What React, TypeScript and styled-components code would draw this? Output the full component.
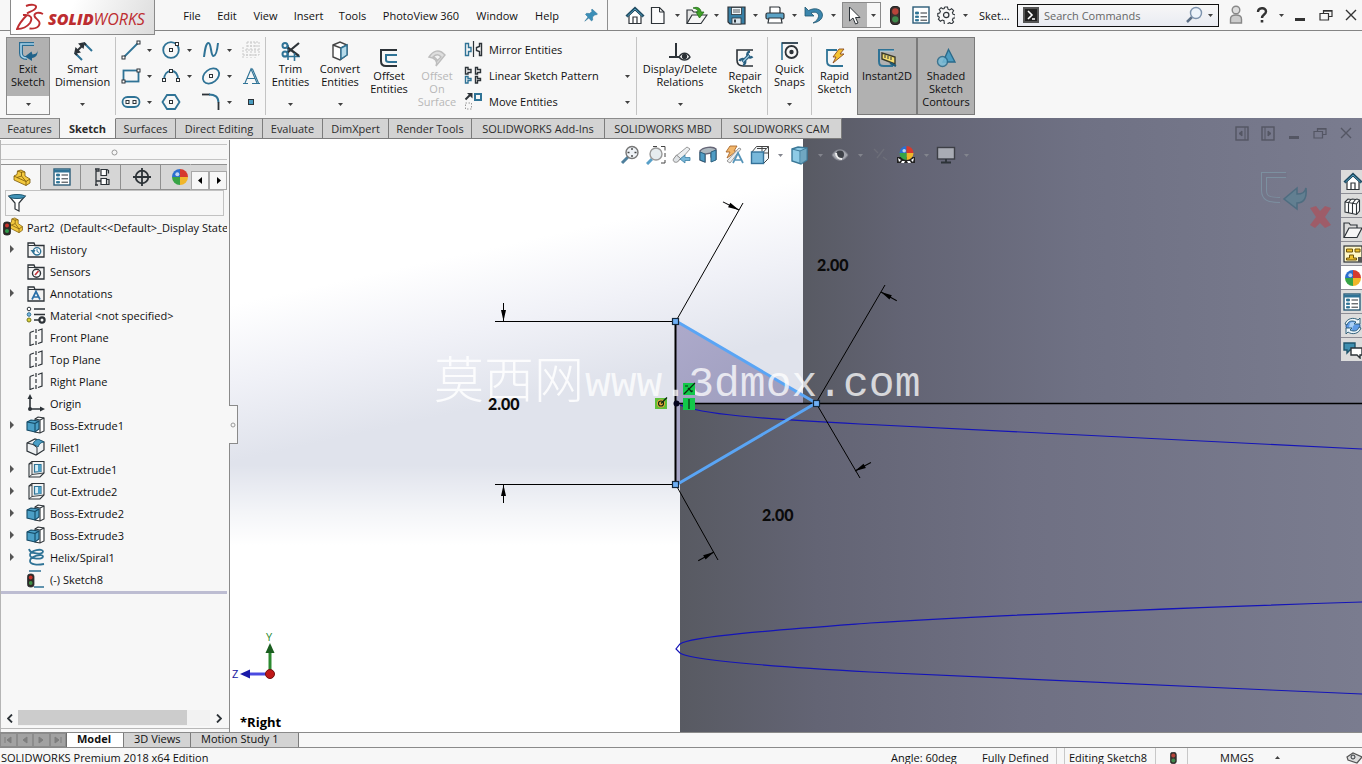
import React from "react";
import styled, { createGlobalStyle } from "styled-components";

const GlobalStyle = createGlobalStyle`
  *, *::before, *::after { box-sizing: border-box; }
  body { margin: 0; overflow: hidden; }
  body, button, input {
    font-family: "Open Sans", "Noto Sans", sans-serif;
    font-size: 11px;
    line-height: 13px;
    color: #101010;
  }
  button { background: none; border: 0; padding: 0; margin: 0; white-space: nowrap; }
  svg { display: block; flex: none; }
  ul { list-style: none; margin: 0; padding: 0; }
`;

const INK = "#2d3338";
const BLUE = "#2f7396";

/* ---------- layout parts ---------- */

const Window = styled.div`
  display: flex;
  flex-direction: column;
  height: 100vh;
  background: #f7f7f7;
`;

const TitleBar = styled.header`
  display: flex;
  align-items: center;
  height: 31px;
  flex: none;
  border-bottom: 1px solid #858585;
`;

const LogoSlot = styled.div`
  align-self: flex-start;
  width: 145px;
  height: 35px;
  margin-left: 10px;
  margin-right: 20px;
  flex: none;
  position: relative;
  z-index: 2;
  display: flex;
  align-items: center;
  gap: 4px;
  background: linear-gradient(115deg, #ffffff 40%, #dcdcdc);
  border: 1px solid #8a8a8a;
  border-top: 0;
  color: #bd2d30;
  padding-left: 5px;
`;

const LogoText = styled.span`
  font-family: "Open Sans", sans-serif;
  font-style: italic;
  font-size: 16px;
  line-height: 20px;
  padding-top: 4px;
  b { font-weight: 800; }
`;

const Menu = styled.nav`
  display: flex;
`;

const MenuItem = styled.button<{ $w: number }>`
  width: ${(p) => p.$w}px;
  height: 26px;
  text-align: center;
`;

const PinButton = styled.button`
  width: 40px;
  height: 30px;
  display: flex;
  align-items: center;
  justify-content: center;
  padding-left: 7px;
  border-right: 1px solid #8f8f8f;
  margin-right: 15px;
`;

const Tools = styled.div`
  display: flex;
  align-items: center;
  flex: none;
`;

const ToolButton = styled.button<{ $w?: number; $on?: boolean }>`
  width: ${(p) => p.$w ?? 24}px;
  height: 24px;
  display: flex;
  align-items: center;
  justify-content: center;
  background: ${(p) => (p.$on ? "#b4b4b4" : "none")};
`;

const ArrowButton = styled.button<{ $w?: number; $h?: number }>`
  width: ${(p) => p.$w ?? 17}px;
  height: ${(p) => p.$h ?? 20}px;
  display: flex;
  align-items: center;
  justify-content: center;
`;

const SelectGroup = styled.div`
  display: flex;
  border: 1px solid #8a8a8a;
  margin-right: 2px;
`;

const DocTitle = styled.span`
  flex: 1;
  min-width: 34px;
  padding-left: 5px;
`;

const SearchBox = styled.form`
  display: flex;
  align-items: center;
  width: 202px;
  height: 23px;
  flex: none;
  border: 1px solid #101010;
  background: linear-gradient(#f7f7f7, #e9ebf2);
  padding-left: 5px;
`;

const SearchInput = styled.input`
  flex: 1;
  min-width: 0;
  border: 0;
  background: none;
  outline: none;
  margin-left: 5px;
  padding: 0;
  &::placeholder { color: #666; opacity: 1; }
`;

const WindowButtons = styled.div`
  display: flex;
  align-items: center;
  padding-left: 4px;
  flex: none;
`;

const Ribbon = styled.section`
  display: flex;
  height: 87px;
  flex: none;
  padding: 6px 0 3px 6px;
`;

const RibbonItem = styled.div<{ $w: number; $on?: boolean }>`
  width: ${(p) => p.$w}px;
  height: 78px;
  flex: none;
  display: flex;
  flex-direction: column;
  align-items: center;
  background: ${(p) => (p.$on ? "#b1b1b1" : "none")};
  border: ${(p) => (p.$on ? "1px solid #7a7a7a" : "1px solid transparent")};
`;

const SplitItem = styled(RibbonItem)`
  background: #f7f7f7;
  border-color: #8a8a8a;
`;

const RibbonButton = styled.button<{ $low?: boolean; $off?: boolean; $pressed?: boolean }>`
  width: 100%;
  height: ${(p) => (p.$low ? 74 : 58)}px;
  flex: none;
  padding-top: ${(p) => (p.$low ? 9 : 2)}px;
  display: flex;
  flex-direction: column;
  align-items: center;
  text-align: center;
  color: ${(p) => (p.$off ? "#b8b8b8" : "#101010")};
  background: ${(p) => (p.$pressed ? "#b1b1b1" : "none")};
`;

const RibbonGlyph = styled.span`
  height: 22px;
  flex: none;
  display: flex;
  align-items: center;
`;

const RibbonLabel = styled.span`
  white-space: pre;
`;

const Rule = styled.i`
  width: 1px;
  height: 78px;
  background: #c4c4c4;
  flex: none;
`;

const SketchGrid = styled.div`
  display: grid;
  grid-template-columns: repeat(4, 40px);
  grid-auto-rows: 26px;
  width: 149px;
  padding-left: 4px;
  overflow: hidden;
  flex: none;
`;

const GridCell = styled.div`
  display: flex;
  align-items: center;
`;

const CommandList = styled.div`
  display: flex;
  flex-direction: column;
  width: 175px;
  padding-left: 3px;
  flex: none;
`;

const CommandRow = styled.div`
  display: flex;
  align-items: center;
  height: 26px;
`;

const Command = styled.button`
  flex: 1;
  display: flex;
  align-items: center;
  gap: 6px;
  text-align: left;
  padding-bottom: 2px;
`;

const Work = styled.main`
  position: relative;
  flex: 1;
  min-height: 0;
  display: flex;
  flex-direction: column;
  background: #ffffff;
`;

const SceneSvg = styled.svg`
  position: absolute;
  inset: 0;
  width: 100%;
  height: 100%;
`;

const TabRow = styled.div`
  position: relative;
  display: flex;
  height: 22px;
  flex: none;
`;

const Tab = styled.button<{ $w: number; $active?: boolean }>`
  width: ${(p) => p.$w}px;
  height: 21px;
  flex: none;
  background: ${(p) => (p.$active ? "#f7f7f7" : "#d3d3d3")};
  font-weight: ${(p) => (p.$active ? 700 : 400)};
  color: #2c2c2c;
  border-right: 1px solid #7c7c7c;
  border-top: 1px solid ${(p) => (p.$active ? "#f7f7f7" : "#8c8c8c")};
  border-bottom: 1px solid #7c7c7c;
`;

const DocButtons = styled.div`
  display: flex;
  align-items: center;
  gap: 6px;
  margin-left: auto;
  padding: 8px 6px 0 0;
  opacity: 0.8;
`;

const Body = styled.div`
  position: relative;
  flex: 1;
  min-height: 0;
  display: flex;
`;

const Sidebar = styled.aside`
  position: relative;
  width: 230px;
  flex: none;
  display: flex;
  flex-direction: column;
  background: #f7f7f7;
  border-left: 1px solid #b5b5b5;
  border-right: 1px solid #8a8a8a;
`;

const Splitter = styled.div`
  height: 16px;
  margin: 4px 2px 4px 0;
  flex: none;
  border-top: 1px solid #c4c4c4;
  border-bottom: 1px solid #c4c4c4;
  display: flex;
  align-items: center;
  justify-content: center;
`;

const PanelTabs = styled.div`
  display: flex;
  height: 26px;
  flex: none;
  margin-right: 2px;
  overflow: hidden;
`;

const PanelTab = styled.button<{ $active?: boolean; $last?: boolean }>`
  width: ${(p) => (p.$last ? 30 : 40)}px;
  flex: none;
  display: flex;
  align-items: center;
  justify-content: center;
  padding-left: ${(p) => (p.$last ? 9 : 2)}px;
  background: ${(p) => (p.$active ? "#f7f7f7" : "#d6d6d6")};
  border-top: 1px solid #909090;
  border-bottom: 1px solid ${(p) => (p.$active ? "#f7f7f7" : "#909090")};
  border-right: 1px solid ${(p) => (p.$last ? "transparent" : "#909090")};
`;

const PanelScroll = styled.div`
  display: flex;
  align-items: flex-end;
  background: #d6d6d6;
  border-top: 1px solid #909090;
  button {
    width: 18px;
    height: 19px;
    background: #f7f7f7;
    border: 1px solid #a8a8a8;
    display: flex;
    align-items: center;
    justify-content: center;
  }
`;

const FilterBox = styled.label`
  display: flex;
  align-items: center;
  height: 26px;
  margin: 0 5px 0 4px;
  padding-left: 1px;
  border: 1px solid #c2c2c2;
  flex: none;
  input { flex: 1; min-width: 0; border: 0; background: none; outline: none; }
`;

const Tree = styled.ul`
  margin-right: 2px;
  overflow: hidden;
  border-bottom: 3px solid #bdbdd2;
  padding-bottom: 1px;
`;

const TreeRow = styled.li<{ $root?: boolean }>`
  display: flex;
  align-items: center;
  height: 22px;
  gap: 4px;
  padding-left: ${(p) => (p.$root ? 2 : 7)}px;
  white-space: pre;
`;

const Expander = styled.button`
  width: 14px;
  height: 22px;
  padding-left: 2px;
  display: flex;
  align-items: center;
  flex: none;
`;

const TreeIcon = styled.span`
  width: 20px;
  flex: none;
  display: flex;
  justify-content: center;
`;

const ScrollRow = styled.div`
  display: flex;
  align-items: center;
  height: 16px;
  margin-top: auto;
  margin-bottom: 2px;
  flex: none;
  padding-right: 2px;
`;

const ScrollTrack = styled.div`
  flex: 1;
  height: 16px;
  background: #f2f2f2;
`;

const ScrollThumb = styled.div`
  width: 88%;
  height: 15px;
  background: #cccccc;
`;

const PanelEdge = styled.div`
  height: 4px;
  flex: none;
  border-top: 1px solid #b8b8b8;
`;

const CollapseHandle = styled.button`
  position: absolute;
  left: 100%;
  top: 265px;
  width: 9px;
  height: 39px;
  background: #f7f7f7;
  border: 1px solid #8a8a8a;
  border-left: 0;
  display: flex;
  align-items: center;
  justify-content: center;
`;

const Viewport = styled.section`
  flex: 1;
  min-width: 0;
`;

const HeadsUp = styled.div`
  display: flex;
  justify-content: center;
  padding-top: 3px;
  padding-right: 2px;
`;

const TaskPane = styled.div`
  position: absolute;
  right: 0;
  top: 30px;
  display: flex;
  flex-direction: column;
  background: #8d8d95;
  gap: 1px;
`;

const TaskButton = styled.button<{ $active?: boolean }>`
  width: 21px;
  height: 23px;
  display: flex;
  align-items: center;
  justify-content: flex-start;
  padding-left: 2px;
  overflow: hidden;
  background: ${(p) => (p.$active ? "#ffffff" : "#dcdcdc")};
`;

const ConfirmCorner = styled.div`
  position: absolute;
  right: 28px;
  top: 30px;
  opacity: 0.8;
`;

const BottomTabs = styled.div`
  display: flex;
  height: 16px;
  flex: none;
  border-top: 1px solid #8a8a8a;
  border-bottom: 1px solid #8a8a8a;
`;

const NavGroup = styled.div`
  display: flex;
  width: 67px;
  background: #a2a2a2;
  border-right: 1px solid #6d6d6d;
  button {
    flex: 1;
    border: 1px solid #8c8c8c;
    display: flex;
    align-items: center;
    justify-content: center;
  }
`;

const BottomTab = styled.button<{ $w: number; $active?: boolean }>`
  width: ${(p) => p.$w}px;
  padding: 0 0 3px 10px;
  text-align: left;
  line-height: 11px;
  background: ${(p) => (p.$active ? "#ffffff" : "#d3d3d3")};
  font-weight: ${(p) => (p.$active ? 700 : 400)};
  border-right: 1px solid #7c7c7c;
`;

const StatusBar = styled.footer`
  display: flex;
  align-items: center;
  height: 16px;
  flex: none;
  padding-left: 1px;
  overflow: hidden;
`;

const StatusCell = styled.span<{ $w: number; $line?: boolean }>`
  width: ${(p) => p.$w}px;
  height: 16px;
  flex: none;
  display: flex;
  align-items: center;
  padding-left: 4px;
  padding-top: 3px;
  border-right: 1px solid ${(p) => (p.$line ? "#c8c8c8" : "transparent")};
`;

const StatusName = styled.span`
  flex: 1;
  padding-top: 3px;
`;

/* ---------- small drawings ---------- */

type IconProps = { w?: number; h?: number; children: React.ReactNode };
const Icon = ({ w = 20, h = 20, children }: IconProps) => (
  <svg width={w} height={h} viewBox={`0 0 ${w} ${h}`} fill="none" stroke={INK} strokeWidth="1.4" aria-hidden="true">
    {children}
  </svg>
);

const Caret = ({ up, color = "#404040" }: { up?: boolean; color?: string }) => (
  <svg width="5" height="3" viewBox="0 0 5 3" aria-hidden="true">
    <path d={up ? "M0 3h5L2.5 0z" : "M0 0h5L2.5 3z"} fill={color} />
  </svg>
);

const Arrow = ({ w, h, label = "More options", color }: { w?: number; h?: number; label?: string; color?: string }) => (
  <ArrowButton $w={w} $h={h} aria-label={label}>
    <Caret color={color} />
  </ArrowButton>
);

const Dot = ({ x, y }: { x: number; y: number }) => (
  <rect x={x - 1.5} y={y - 1.5} width="3" height="3" fill="#fff" stroke={INK} strokeWidth="1" />
);

const TrafficLight = ({ h = 18 }: { h?: number }) => (
  <svg width={(h * 10) / 18} height={h} viewBox="0 0 10 18" aria-hidden="true">
    <rect x="0.5" y="0.5" width="9" height="17" rx="3.5" fill="#3a3230" stroke="#222" />
    <circle cx="5" cy="5.2" r="3" fill="#b8443a" />
    <circle cx="5" cy="12.6" r="3" fill="#3f8a4c" />
  </svg>
);

const Ball = ({ x, y, r }: { x: number; y: number; r: number }) => (
  <g stroke="none">
    <path d={`M${x} ${y}V${y - r}A${r} ${r} 0 0 0 ${x - r} ${y}z`} fill="#2b6fd0" />
    <path d={`M${x} ${y}V${y - r}A${r} ${r} 0 0 1 ${x + r} ${y}z`} fill="#d63a2e" />
    <path d={`M${x} ${y}H${x + r}A${r} ${r} 0 0 1 ${x} ${y + r}z`} fill="#f0b62a" />
    <path d={`M${x} ${y}V${y + r}A${r} ${r} 0 0 1 ${x - r} ${y}z`} fill="#37a446" />
    <circle cx={x - r / 3} cy={y - r / 3} r={r / 4} fill="#fff" opacity="0.7" />
  </g>
);

const HomeIcon = () => (
  <Icon w={20} h={19}>
    <path d="M4 9v8.5h12V9L10 3.5z" fill="#fff" strokeWidth="1.2" />
    <path d="M8 17.5V11h4v6.500" strokeWidth="1.2" />
    <path d="M1.500 10.500L10 2.500l8.500 8" stroke="#1f4a61" strokeWidth="3" />
    <path d="M2.500 10L10 3l7.500 7" stroke="#4f9dbd" strokeWidth="1" />
  </Icon>
);

const NewIcon = () => (
  <Icon w={16} h={19}>
    <path d="M1.500 1.500h8l4.500 4.500v11.500h-12.500z" fill="#fbfbfb" strokeWidth="1.2" />
    <path d="M9.500 1.500v4.500h4.500" strokeWidth="1" />
  </Icon>
);

const FolderIcon = () => (
  <Icon w={20} h={19}>
    <path d="M1 17V3h5l1.500 2H14v3" fill="#dcdcdc" strokeWidth="1.2" />
    <path d="M1 17.500L6 8h13l-5 9.500z" fill="#f6f6f6" strokeWidth="1.2" />
  </Icon>
);

const OpenIcon = () => (
  <Icon w={22} h={19}>
    <path d="M1 17V4h5l1.500 2H13v3" fill="#e6e6e6" strokeWidth="1.2" />
    <path d="M1 17.500L6 9h15l-6 8.500z" fill="#f6f6f6" strokeWidth="1.2" />
    <path d="M7 2c5-2 8 1 8 4h3l-4.500 6L10 6h2c0-2-2-3.500-5-4z" fill="#3fa227" stroke="#24701a" strokeWidth="0.8" />
  </Icon>
);

const SaveIcon = () => (
  <Icon w={19} h={19}>
    <path d="M1 1h17v17H3l-2-2z" fill="#377fa5" strokeWidth="1.2" />
    <rect x="4.500" y="1.500" width="10" height="7" fill="#eef5f9" strokeWidth="0.8" />
    <path d="M6 4h7M6 6h7" strokeWidth="0.8" />
    <rect x="5" y="12" width="9" height="6" fill="#d9e6ee" strokeWidth="0.8" />
    <path d="M7 13.500h2v3H7z" fill={INK} stroke="none" />
  </Icon>
);

const PrintIcon = () => (
  <Icon w={20} h={18}>
    <path d="M5 7V1h9l1 1v5" fill="#fff" strokeWidth="1.2" />
    <rect x="1" y="7" width="18" height="6" rx="1.500" fill="#5ba3c6" strokeWidth="1.2" />
    <path d="M4 12h12l1 5H3z" fill="#fff" strokeWidth="1.2" />
  </Icon>
);

const UndoIcon = () => (
  <Icon w={20} h={18}>
    <path d="M1 1v9h9L7 7c4-2 8 0 7.500 3.500C14 13 12.500 15 9 17c6-1 9.500-4 9.500-8C18 3 11 1 4.500 4.500z" fill="#3b86ad" stroke="#20556f" strokeWidth="0.8" />
  </Icon>
);

const CursorIcon = () => (
  <Icon w={14} h={19}>
    <path d="M1.500 1v14l3.500-3 2.500 6 2.500-1-2.500-5.500H12z" fill="#fff" strokeWidth="1" />
  </Icon>
);

const OptionsIcon = ({ head }: { head?: boolean }) => (
  <Icon w={18} h={18}>
    <rect x="1" y="1" width="16" height="16" fill="#fff" stroke="#2b5c78" strokeWidth="1.400" />
    {head && <path d="M1 3h16" stroke={BLUE} strokeWidth="3" />}
    <path d="M3.500 6h3v2h-3zM3.500 10h3v1.500h-3zM3.500 13.500h3V15h-3z" fill={BLUE} stroke={BLUE} strokeWidth="0.800" />
    <path d="M8.500 7h6.500M8.500 10.800h6.500M8.500 14.200h6.500" strokeWidth="1" />
  </Icon>
);

const GearIcon = () => (
  <Icon w={18} h={18}>
    <path
      d="M7.500 1h3l.5 2.200 1.700.7 1.900-1.200 2 2-1.200 1.900.7 1.700 2.200.5v3l-2.200.5-.7 1.700 1.200 1.900-2 2-1.900-1.200-1.700.7-.5 2.200h-3L7 14.700l-1.700-.7-1.900 1.200-2-2L2.600 11.300"
      strokeWidth="1.100"
    />
    <path d="M2.600 11.300L.8 10.200V7.500L2.700 7l.7-1.700L2.200 3.500l1.900-1.800L6 3l1.200-.5.300-1.500" strokeWidth="1.100" />
    <circle cx="9.200" cy="9" r="2.700" strokeWidth="1.200" />
  </Icon>
);

const PinIcon = () => (
  <Icon w={14} h={14}>
    <path d="M8 1l5.500 5-1.500 1-1-.3-2.500 2.300.2 3-1.200 1-2.700-3L.8 13.200 4 9 1.500 6.500l1-1.200 3 .2L8 3.500 7.500 2z" fill="#3b8fb8" stroke="#2b7196" strokeWidth="0.500" />
  </Icon>
);

const Restore = ({ color = "#333" }: { color?: string }) => (
  <Icon w={14} h={12}>
    <path d="M4.500 4V1.500h8.500v6h-3.500M1 4.500h8.500V11H1z" stroke={color} strokeWidth="1.200" />
    <path d="M4 2h9" stroke={color} />
  </Icon>
);

const Cross = ({ color = "#333" }: { color?: string }) => (
  <Icon w={12} h={12}><path d="M1 1l10 10M11 1L1 11" stroke={color} /></Icon>
);

const Minus = ({ color = "#333" }: { color?: string }) => (
  <Icon w={12} h={14}><path d="M1 11.500h10" stroke={color} strokeWidth="3" /></Icon>
);

/* ---------- ribbon icons ---------- */

const ExitIcon = () => (
  <Icon w={22} h={22}>
    <path d="M17 4H4v9c0 4 2 5 6 5" stroke="#2a6c92" strokeWidth="4" />
    <path d="M17 4H4v9c0 4 2 5 6 5" stroke="#a9d4ea" strokeWidth="1.600" />
    <path d="M20.500 10c0 3-1.500 4-5 4.500l-1-3-6.500 5 7 4.500v-3c4-.5 6-3 5.500-8z" fill="#1f628a" stroke="none" />
  </Icon>
);

const DimensionIcon = () => (
  <Icon w={22} h={22}>
    <path d="M5 11l6-6" stroke={INK} strokeWidth="2" />
    <path d="M2 14l1.500-7L9 12.500zM13 2l-1.500 7L6 3.500z" fill={INK} stroke="none" />
    <path d="M12 3l8 8M3 13l7 7" stroke={BLUE} strokeWidth="2" />
    <path d="M12 3l2 2M3 13l2 2" stroke={INK} strokeWidth="2" />
  </Icon>
);

const TrimIcon = () => (
  <Icon w={22} h={22}>
    <path d="M3 16.500h17M8 5v15" stroke={BLUE} strokeWidth="1.600" />
    <path d="M19 3L7 13M7 7l12 9" stroke={INK} strokeWidth="2.200" />
    <circle cx="5" cy="5.500" r="2.500" stroke={BLUE} strokeWidth="2" />
    <circle cx="5" cy="14" r="2.500" stroke={BLUE} strokeWidth="2" />
    <path d="M14.500 13v8" stroke={BLUE} strokeWidth="1.600" />
  </Icon>
);

const ConvertIcon = () => (
  <Icon w={22} h={22}>
    <path d="M4 5l7-3 7 3v10l-7 5-7-3z" fill="#fff" stroke="#444" />
    <path d="M4 5l8 3v11M12 8l6-3" stroke="#444" />
    <path d="M12 8l6-3v10l-6 4z" fill="#b7dbea" stroke={BLUE} />
  </Icon>
);

const OffsetIcon = () => (
  <Icon w={20} h={20}>
    <path d="M18 2H2v11c0 4 2 5 5 5h11" strokeWidth="2" />
    <path d="M18 7H7v5c0 1 1 2 3 2h8" stroke={BLUE} strokeWidth="2" />
  </Icon>
);

const SurfaceIcon = () => (
  <Icon w={20} h={20}>
    <path d="M2 9c4-6 10-9 16-2L9 18c2-5-1-8-7-9z" fill="#dedede" stroke="#bdbdbd" />
    <path d="M6 9c3-3 6-3 8 0l-4 4c0-2-1-3-4-4z" stroke="#bdbdbd" fill="#f2f2f2" />
  </Icon>
);

const RelationsIcon = () => (
  <Icon w={28} h={20}>
    <path d="M10 2v14M3 16h13" strokeWidth="2" />
    <path d="M13 16c3-5 8-5 11 0-3 4-8 4-11 0z" fill="#fff" />
    <circle cx="18.500" cy="15.500" r="2" fill={INK} />
  </Icon>
);

const RepairIcon = () => (
  <Icon w={20} h={20}>
    <path d="M18 2H2v10c0 4 2 6 6 6h10" stroke={INK} strokeWidth="1.600" />
    <path d="M7.500 14l7-7" stroke="#285f80" strokeWidth="3.600" />
    <path d="M17.500 8.500a3 3 0 1 1-2.500-5M4.500 13a3 3 0 1 1 3.500 4" stroke="#285f80" strokeWidth="2.400" />
    <path d="M8 13.500l6-6" stroke="#9ccbe2" strokeWidth="1.200" />
  </Icon>
);

const SnapsIcon = () => (
  <Icon w={20} h={20}>
    <path d="M2 19V2h16" stroke={BLUE} strokeWidth="1.600" />
    <path d="M2 2h16" stroke={INK} />
    <circle cx="11.500" cy="11" r="6" strokeWidth="1.800" />
    <circle cx="11.500" cy="11" r="1.500" fill={INK} />
  </Icon>
);

const RapidIcon = () => (
  <Icon w={20} h={20}>
    <path d="M12 2H2v11c0 3 2 5 5 5h11" stroke={BLUE} strokeWidth="1.800" />
    <path d="M14 1h5l-4 5h4L8 15l3-6H8z" fill="#f5c431" stroke="#8a4a20" strokeWidth="0.900" />
  </Icon>
);

const InstantIcon = () => (
  <Icon w={20} h={20}>
    <path d="M17 2H2v11c0 4 1 5 5 5h9" stroke={BLUE} strokeWidth="2" />
    <path d="M17 3H3" stroke="#b6dced" strokeWidth="0.800" />
    <path d="M5 5l13 4v7L5 11z" fill="#f3dc6e" stroke="#3b3b2a" />
    <path d="M8 7v3M11 8v3M14 9v3" strokeWidth="1" />
    <path d="M13 15l6 3" stroke="#1d5a78" strokeWidth="2" />
  </Icon>
);

const ShadedIcon = () => (
  <Icon w={20} h={20}>
    <path d="M12.500 1.500L19 14H7z" fill="#4d9cc0" stroke="#2a6a8a" />
    <circle cx="6.500" cy="13.500" r="5" fill="#78bcd8" stroke="#2a6a8a" opacity="0.850" />
  </Icon>
);

const LineIcon = () => (
  <Icon><path d="M3 17L17 3" stroke={BLUE} strokeWidth="1.800" /><Dot x={2.500} y={17.500} /><Dot x={17.500} y={2.500} /></Icon>
);
const CircleIcon = () => (
  <Icon><circle cx="10" cy="10" r="7.800" stroke={BLUE} strokeWidth="1.800" /><Dot x={10} y={10} /><Dot x={16} y={4} /></Icon>
);
const SplineIcon = () => (
  <Icon><path d="M3 17C4 9 5 3 7.500 3c3 0 2 13 5 13 2.500 0 4-8 4.500-13" stroke={BLUE} strokeWidth="2" /></Icon>
);
const PlaneGridIcon = () => (
  <Icon><path d="M6 2h12v13M6 6h12M4 10h14M2 15h16M2 18V7M6 2v16M10 2v16M14 2v16" stroke="#c8c8c8" strokeWidth="1" strokeDasharray="2 1" /></Icon>
);
const RectIcon = () => (
  <Icon><rect x="2.500" y="4.500" width="15" height="11" stroke={BLUE} strokeWidth="1.800" /><Dot x={2.500} y={15.500} /><Dot x={17.500} y={4.500} /></Icon>
);
const ArcIcon = () => (
  <Icon><path d="M3 14C3 8 6 5 10 5s7 3 7 9" stroke={BLUE} strokeWidth="1.800" /><Dot x={3} y={14} /><Dot x={10} y={5} /><Dot x={17} y={14} /></Icon>
);
const EllipseIcon = () => (
  <Icon><ellipse cx="10" cy="10" rx="9" ry="6.500" transform="rotate(-38 10 10)" stroke={BLUE} strokeWidth="1.800" /><Dot x={10} y={10} /></Icon>
);
const TextIcon = () => (
  <Icon>
    <path d="M2 17.500h5M11 17.500h8M4 17L10 3l6 14M6.500 12.500h8" stroke={BLUE} strokeWidth="1.100" />
    <path d="M10 3h1.500l6 14" stroke={BLUE} strokeWidth="1.100" />
  </Icon>
);
const SlotIcon = () => (
  <Icon><rect x="1.500" y="5" width="17" height="10" rx="5" stroke={BLUE} strokeWidth="1.800" /><Dot x={6.500} y={10} /><Dot x={13.500} y={10} /></Icon>
);
const PolygonIcon = () => (
  <Icon><path d="M1.500 10L6 3h8l4.500 7-4.500 7H6z" stroke={BLUE} strokeWidth="1.800" /><Dot x={10} y={10} /></Icon>
);
const FilletIcon = () => (
  <Icon><path d="M1 2.500h8" strokeWidth="1.800" /><path d="M8 2.500c6 0 9.500 2 9.500 8" stroke={BLUE} strokeWidth="1.800" /><path d="M17.500 10v8" strokeWidth="1.800" /></Icon>
);
const PointIcon = () => (
  <Icon><rect x="7.500" y="7.500" width="5" height="5" fill="#4a9cc0" strokeWidth="1" /></Icon>
);

const MirrorIcon = () => (
  <Icon w={19} h={18}>
    <path d="M1.500 3.500h3v4h2.500v4H4.500v4h-3z" stroke={BLUE} /><path d="M9.500 1v16" strokeWidth="1.200" />
    <path d="M17.500 3.500h-2v3l-3 1v3l3 1v4h2z" />
  </Icon>
);
const PatternIcon = () => (
  <Icon w={19} h={18}>
    <path d="M1.500 1.500h2.500v2h3v3h-3v1.500H1.500z" /><path d="M11.500 1.500h2v2h3v3h-3v1.500h-2z" />
    <path d="M1.500 10.500h2.500v2h3v2h-3V17H1.500z" stroke={BLUE} /><path d="M11.500 10.500h2v2h3v2h-3V17h-2z" />
  </Icon>
);
const MoveIcon = () => (
  <Icon w={19} h={18}>
    <path d="M1.500 7.500l5-5" strokeWidth="2" /><path d="M3 1h5.500v5.500z" fill={INK} stroke="none" />
    <rect x="11" y="2" width="6" height="6" stroke={BLUE} strokeWidth="2" />
    <rect x="1.500" y="11" width="6" height="6" stroke="#999" strokeWidth="1" strokeDasharray="1.500 1.500" />
  </Icon>
);

/* ---------- tree icons ---------- */

const PartShape = () => (
  <g stroke="#7a5808" strokeWidth="0.800">
    <path d="M1 7l3-1.500L4.500 2 8 1l4 2v4l5 3v4l-4 2.500L1 11z" fill="#f3c93e" />
    <path d="M1 7l3 1.500L8.500 7V3L12 3M4.500 2l4 1.500M8.500 7l4.500 5.500v4M13 12.500l4-2.500M4 8.500l9 4" />
  </g>
);
const PartIcon = () => <Icon w={18} h={17}><PartShape /></Icon>;
const RootPartIcon = () => (
  <Icon w={20} h={20}>
    <g transform="translate(5 0) scale(0.850 0.950)"><PartShape /></g>
    <rect x="0.500" y="5" width="7" height="13" rx="2.500" fill="#2e2826" stroke="#222" strokeWidth="0.800" />
    <circle cx="4" cy="8.500" r="2" fill="#c8342c" stroke="none" /><circle cx="4" cy="14" r="2" fill="#2f9a4a" stroke="none" />
  </Icon>
);
const FolderBase = ({ children }: { children: React.ReactNode }) => (
  <Icon w={18} h={17}>
    <path d="M1 16V2h6l1 2.500h9V16z" fill="#f3f3f3" strokeWidth="1.300" />
    <path d="M1 4.500h7" strokeWidth="1" />
    {children}
  </Icon>
);
const HistoryIcon = () => (
  <FolderBase><circle cx="10" cy="10.300" r="3.700" stroke={BLUE} fill="#fff" /><path d="M10 8v2.500l2 1" stroke={BLUE} strokeWidth="1" /><path d="M3.500 9l3 4 2-4z" fill={BLUE} stroke="none" /></FolderBase>
);
const SensorIcon = () => (
  <FolderBase><circle cx="9.500" cy="10.300" r="4" fill="#fff" /><path d="M8 12l3.500-4" stroke="#c5333a" strokeWidth="1.600" /></FolderBase>
);
const AnnotationIcon = () => (
  <FolderBase><path d="M5 14.500L9 6.500l4 8M6.500 12h5" stroke="#2a6fa8" strokeWidth="1.700" /></FolderBase>
);
const MaterialIcon = () => (
  <Icon w={20} h={18}>
    <path d="M8 3h11M8 8.500h11M8 14h5" strokeWidth="1.600" />
    <circle cx="3" cy="3" r="1.800" fill="#fff" strokeWidth="1" /><circle cx="3" cy="8.500" r="1.800" fill="#79b5e0" stroke={BLUE} strokeWidth="1" /><circle cx="3" cy="14" r="2" fill="#d9d23a" stroke="#77751a" strokeWidth="1" />
    <circle cx="16" cy="14" r="2.600" strokeWidth="2.200" />
  </Icon>
);
const PlaneIcon = () => (
  <Icon w={16} h={18}>
    <path d="M2 4.500v13l4-1.500M2 4.500L6 3M10 2.500l4-1.500v13l-4 1.500" strokeWidth="1.200" />
    <path d="M8 1v16" strokeWidth="1.200" strokeDasharray="4 2" />
  </Icon>
);
const OriginIcon = () => (
  <Icon w={18} h={18}>
    <path d="M3 3v12h12" strokeWidth="1.600" /><path d="M.5 5L3 0l2.500 5zM13 12.500l5 2.500-5 2.500z" fill={INK} stroke="none" /><circle cx="3" cy="15" r="2" fill={INK} stroke="none" />
  </Icon>
);
const BossIcon = () => (
  <Icon w={20} h={18}>
    <path d="M9 3l3-2 6 1v13l-4 2-5-1z" fill="#fff" strokeWidth="1.100" /><path d="M14 17V4l4-2M14 4L9 3" strokeWidth="1.100" />
    <path d="M1 6l4-2 8 1v8l-4 3-8-2z" fill="#4b9fc6" stroke="#154a66" strokeWidth="1.100" /><path d="M1 6l8 1.500V16M9 7.500L13 5" stroke="#154a66" strokeWidth="1.100" />
  </Icon>
);
const FilletFeatureIcon = () => (
  <Icon w={20} h={18}>
    <path d="M1 5l8-4 9 3v8l-8 5-9-4z" fill="#eef1f3" strokeWidth="1.200" /><path d="M7 6c1-3 4-5 6-4.500l5 2.500c-3 0-5 2-6 5z" fill="#4b9fc6" stroke="#225f7c" strokeWidth="1" /><path d="M1 5l6 1.500 4 3V17" strokeWidth="1" />
  </Icon>
);
const CutIcon = () => (
  <Icon w={18} h={18}>
    <path d="M2 4l3-2.500h12V13l-4 4H2z" fill="#f3f3f3" strokeWidth="1.100" />
    <path d="M2 4l3-.5M5 1.500v13l12-1.500M5 14.500L2 17" strokeWidth="0.900" />
    <path d="M7.500 4.500h6.500v7l-6.500.5z" fill="#d8edf6" stroke={BLUE} strokeWidth="1.200" />
    <path d="M11 5v6.500h3V5z" fill="#4b9fc6" stroke="none" />
  </Icon>
);
const HelixIcon = () => (
  <Icon w={20} h={20}>
    <path d="M3 2c1 5 14 6 14 2.500C17 1 4 3 4 8" stroke={BLUE} strokeWidth="1.800" />
    <path d="M4 8c0 4 13 5 13 1.500C17 6 4 9 4 14c0 4 8 4 14 3" stroke={BLUE} strokeWidth="1.800" />
  </Icon>
);
const SketchIcon = () => (
  <Icon w={20} h={20}>
    <path d="M3 2h12M8 18h10" stroke={BLUE} strokeWidth="1.600" />
    <rect x="1.500" y="5" width="6.500" height="13" rx="2.500" fill="#2e2826" strokeWidth="0.800" />
    <circle cx="4.700" cy="8.500" r="1.900" fill="#c8342c" stroke="none" /><circle cx="4.700" cy="14" r="1.900" fill="#3f8f45" stroke="none" />
  </Icon>
);
const ConfigIcon = () => (
  <Icon w={18} h={20}>
    <path d="M3 2v16M2 2h4v2H3M2 18h3M3 14h5" strokeWidth="1.300" /><path d="M8 2.500h5.500v6H8zM8 11.500h5.500v6H8z" fill="#fff" strokeWidth="1.200" /><path d="M10 2.500h4l1.500 1v3M13.500 12.500h2.500v5h-3" strokeWidth="1.200" />
  </Icon>
);
const TargetIcon = () => (
  <Icon><circle cx="10" cy="10" r="6.300" strokeWidth="1.800" /><path d="M10 1v18M1 10h18" strokeWidth="1.800" /></Icon>
);
const FilterIcon = () => (
  <Icon w={20} h={20}>
    <path d="M2 3h16l-6 7v8l-4-2v-6z" fill="#fff" strokeWidth="1.200" /><ellipse cx="10" cy="3.500" rx="8" ry="2" fill="#3f93b8" stroke="#1f5873" strokeWidth="1" />
  </Icon>
);

/* ---------- view toolbar icons ---------- */

const ZoomFitIcon = () => (
  <Icon><path d="M2 18l6-6" stroke="#4e7f9c" strokeWidth="3" /><circle cx="12" cy="7.500" r="6" fill="#eef2f6" stroke="#777" /><path d="M12 3v2M12 10v2M7.500 7.500h2M14.500 7.500h2" stroke="#444" /></Icon>
);
const ZoomAreaIcon = () => (
  <Icon><path d="M1 19l5-5" stroke="#58a0c8" strokeWidth="3" /><circle cx="10" cy="9" r="6" fill="#e6ecef" stroke="#999" /><path d="M7 1.500h4M15 1.500h4v4M19 8v4M19 15v3h-4" stroke="#444" strokeWidth="1" /></Icon>
);
const PreviousIcon = () => (
  <Icon><path d="M4 11L15 2l3 2-7 8-4 3z" fill="#eceff1" stroke="#999" strokeWidth="1" /><path d="M1.500 14l3-4 4 3.500-3 3.500c-3 1-5-1-4-3z" fill="#dfe3e6" stroke="#888" strokeWidth="1" /><path d="M8 14l5-4v2.500h5v3h-5V18z" fill="#78b8da" stroke="#3d80a4" strokeWidth="0.800" /></Icon>
);
const SectionIcon = () => (
  <Icon><path d="M2 6c3-4 13-5 16-2v10l-5-2V8L7 9v8l-5-2z" fill="#aeb9c0" stroke="#667" /><path d="M2 7l5 2v8l-5-2zM13 7l5-2v10l-5 2z" fill="#4f9cc4" stroke="#2c617f" strokeWidth="1" /></Icon>
);
const DynamicIcon = () => (
  <Icon><path d="M6 1h7l-3 5h3L3 13l3-6H2z" fill="#f2b66a" stroke="#a9692c" strokeWidth="0.900" /><path d="M3 16L15 3l2 1L6 18z" fill="#ededed" stroke="#999" strokeWidth="1" /><path d="M9 18l5-10 5 10M11 15h6" stroke="#5694b8" strokeWidth="1.700" /></Icon>
);
const OrientIcon = () => (
  <Icon><path d="M1.500 7.500l5-6h12v12l-5 5" fill="#f4f8fa" stroke="#444" strokeWidth="1" /><path d="M13 7.500l5.500-6M12 1.500v5M7 3.500h9M18 8h-4" stroke="#444" strokeWidth="1" /><rect x="1.500" y="7" width="12" height="11.500" fill="#78b8da" stroke="#34729a" /></Icon>
);
const DisplayStyleIcon = () => (
  <Icon><path d="M2 4l6-2 9 1v12l-6 4-9-3z" fill="#8ecbe6" stroke="#3a7898" /><path d="M2 4l8 2v13M10 6l7-3" stroke="#3a7898" strokeWidth="1" /><path d="M10 6l7-3v12l-6 4z" fill="#5c8fa8" stroke="none" opacity="0.600" /></Icon>
);
const HideIcon = () => (
  <Icon><path d="M2 10c4-7 12-7 16 0-4 7-12 7-16 0z" fill="#a4a6ae" stroke="#83858f" strokeWidth="1" /><circle cx="10" cy="9.500" r="4" fill="#3e4148" stroke="none" /><path d="M6 8c0 4 3 6 6 6" stroke="#eee" strokeWidth="2" /></Icon>
);
const EditAppearanceIcon = () => (
  <Icon><path d="M4 4l4 4M14 4l-7 9M13 12l4 3" stroke="#75777f" strokeWidth="1.400" opacity="0.600" /></Icon>
);
const SceneIcon = () => (
  <Icon><path d="M1 12v6h18v-6z" fill="#222" stroke="none" /><path d="M2 13l3 2-2 2zM18 13l-3 2 2 2zM6 16h3l-1 2H5zM11 16h3l1 2h-3z" fill="#fff" stroke="none" /><Ball x={10.500} y={8} r={7} /></Icon>
);
const ScreenIcon = () => (
  <Icon><rect x="1.500" y="2.500" width="17" height="11.500" fill="#a9acb4" stroke="#3d3f46" /><path d="M10 14v3M5 17.500h10" strokeWidth="1.800" /></Icon>
);

/* ---------- task pane icons ---------- */

const BooksIcon = () => (
  <Icon w={18} h={20}>
    <path d="M2 6l3-3 3 .5L9.500 3l3 .5 1.500-.500 2.500 1v11l-3 3.500L2 16z" fill="#fff" strokeWidth="1.100" /><path d="M5.500 17V7M9.500 17.500V7.500M13.500 18V8M2 6l11.500 2 3-4M5.500 6.500L8 3.500M9.500 7.500l3-4" strokeWidth="1.100" />
  </Icon>
);
const PaletteIcon = () => (
  <Icon w={20} h={18}>
    <rect x="1" y="1" width="18" height="16" fill="#fff7c8" strokeWidth="1.200" /><path d="M3.500 4h6v3h-6zM12 4h5v3h-5zM3.500 13h3v-3h4v3h3v2h-10z" fill="#f0c22e" stroke="#6d5309" strokeWidth="1" /><path d="M15 12h4v5h-4z" fill="#555" stroke="none" />
  </Icon>
);
const RefreshIcon = () => (
  <Icon w={20} h={20}>
    <circle cx="10" cy="10" r="7" fill="#5f9ce6" stroke="#2a5aa0" strokeWidth="1" />
    <path d="M7 7c2-2 5-1 6 1l-3 2-1 4-3-3z" fill="#a9d0f5" stroke="none" />
    <path d="M2 8c2-6 9-7 13-4l2-2v6h-6l2-2C9 4 5 5 4 9z" fill="#eaf4fa" stroke="#24566f" strokeWidth="0.900" />
    <path d="M18 12c-2 6-9 7-13 4l-2 2v-6h6l-2 2c4 2 8 1 9-3z" fill="#eaf4fa" stroke="#24566f" strokeWidth="0.900" />
  </Icon>
);
const ForumIcon = () => (
  <Icon w={20} h={18}>
    <path d="M1 2h11v7H7l-3 3V9H1z" fill="#3f8fb0" stroke="#1f556d" /><path d="M8 7h11v7h-2v3l-3-3H8z" fill="#fff" stroke={INK} />
  </Icon>
);

/* ---------- data ---------- */

const menus: [string, number][] = [
  ["File", 34], ["Edit", 36], ["View", 41], ["Insert", 45], ["Tools", 43],
  ["PhotoView 360", 94], ["Window", 58], ["Help", 42],
];

const fileTools: [string, () => React.ReactElement][] = [
  ["New", NewIcon], ["Open", OpenIcon], ["Save", SaveIcon], ["Print", PrintIcon], ["Undo", UndoIcon],
];

const sketchTools: [string, () => React.ReactElement, boolean][] = [
  ["Line", LineIcon, true], ["Circle", CircleIcon, true], ["Spline", SplineIcon, true], ["Plane", PlaneGridIcon, false],
  ["Rectangle", RectIcon, true], ["Arc", ArcIcon, true], ["Ellipse", EllipseIcon, true], ["Sketch text", TextIcon, false],
  ["Slot", SlotIcon, true], ["Polygon", PolygonIcon, false], ["Sketch fillet", FilletIcon, true], ["Point", PointIcon, false],
];

const tabs: [string, number][] = [
  ["Features", 60], ["Sketch", 56], ["Surfaces", 60], ["Direct Editing", 87], ["Evaluate", 60], ["DimXpert", 66],
  ["Render Tools", 83], ["SOLIDWORKS Add-Ins", 133], ["SOLIDWORKS MBD", 117], ["SOLIDWORKS CAM", 120],
];

const tree: [string, () => React.ReactElement, boolean][] = [
  ["History", HistoryIcon, true], ["Sensors", SensorIcon, false], ["Annotations", AnnotationIcon, true],
  ["Material <not specified>", MaterialIcon, false], ["Front Plane", PlaneIcon, false], ["Top Plane", PlaneIcon, false],
  ["Right Plane", PlaneIcon, false], ["Origin", OriginIcon, false], ["Boss-Extrude1", BossIcon, true],
  ["Fillet1", FilletFeatureIcon, false], ["Cut-Extrude1", CutIcon, true], ["Cut-Extrude2", CutIcon, true],
  ["Boss-Extrude2", BossIcon, true], ["Boss-Extrude3", BossIcon, true], ["Helix/Spiral1", HelixIcon, true],
  ["(-) Sketch8", SketchIcon, false],
];

const viewTools: [string, () => React.ReactElement, boolean][] = [
  ["Zoom to fit", ZoomFitIcon, false], ["Zoom to area", ZoomAreaIcon, false], ["Previous view", PreviousIcon, false],
  ["Section view", SectionIcon, false], ["Annotation views", DynamicIcon, false], ["View orientation", OrientIcon, true],
  ["Display style", DisplayStyleIcon, true], ["Hide or show items", HideIcon, true], ["Edit appearance", EditAppearanceIcon, false],
  ["Apply scene", SceneIcon, true], ["View settings", ScreenIcon, true],
];

const BallIcon = () => <Icon><Ball x={10} y={10} r={8} /></Icon>;

const taskTools: [string, () => React.ReactElement][] = [
  ["Resources", HomeIcon], ["Design library", BooksIcon], ["File explorer", FolderIcon], ["View palette", PaletteIcon],
  ["Appearances", BallIcon], ["Custom properties", () => <OptionsIcon head />], ["Auto recovery", RefreshIcon], ["Forum", ForumIcon],
];

/* ---------- model scene ---------- */

/* Dimension arrowhead: tip at (x, y), shaft running back along angle a. */
const Head = ({ x, y, a }: { x: number; y: number; a: number }) => (
  <g transform={`translate(${x} ${y}) rotate(${a})`}>
    <path d="M0 0h18" />
    <path d="M0 0l11-2.500v5z" fill="#000" stroke="none" />
  </g>
);

const Handle = ({ x, y }: { x: number; y: number }) => (
  <rect x={x - 3} y={y - 3} width="6" height="6" fill="#6fb0f5" stroke="#14283c" strokeWidth="1.200" />
);

const Scene = () => (
  <SceneSvg role="img" aria-label="Sketch of a triangle on the model">
    <defs>
      <linearGradient id="sky" gradientUnits="userSpaceOnUse" x1="230" y1="305" x2="263" y2="455">
        <stop offset="0" stopColor="#ffffff" />
        <stop offset="0.500" stopColor="#f0f1f7" />
        <stop offset="1" stopColor="#e0e3ec" />
      </linearGradient>
      <linearGradient id="ground" gradientUnits="userSpaceOnUse" x1="0" y1="465" x2="0" y2="545">
        <stop offset="0" stopColor="#fff" stopOpacity="0" />
        <stop offset="0.600" stopColor="#fff" stopOpacity="0.650" />
        <stop offset="1" stopColor="#fff" />
      </linearGradient>
      <linearGradient id="upper" gradientUnits="userSpaceOnUse" x1="803" y1="0" x2="1362" y2="0">
        <stop offset="0" stopColor="#585a63" />
        <stop offset="0.180" stopColor="#636474" />
        <stop offset="0.500" stopColor="#6f7184" />
        <stop offset="1" stopColor="#7a7c8f" />
      </linearGradient>
      <linearGradient id="lower" gradientUnits="userSpaceOnUse" x1="680" y1="0" x2="1362" y2="0">
        <stop offset="0" stopColor="#585a62" />
        <stop offset="0.200" stopColor="#636474" />
        <stop offset="0.500" stopColor="#6f7083" />
        <stop offset="1" stopColor="#7a7c8f" />
      </linearGradient>
      <linearGradient id="face" x1="0" y1="0" x2="1" y2="1">
        <stop offset="0" stopColor="#adaacb" />
        <stop offset="1" stopColor="#9c9cbc" />
      </linearGradient>
    </defs>
    <g transform="translate(0 -118)">
      <rect x="230" y="118" width="100%" height="100%" fill="url(#sky)" />
      <rect x="230" y="460" width="100%" height="100%" fill="url(#ground)" />
      <rect x="803" y="118" width="100%" height="286" fill="url(#upper)" />
      <rect x="680" y="404" width="100%" height="100%" fill="url(#lower)" />
      <path d="M676 321L803 396v8H676z" fill="url(#face)" />
      <path d="M676 404h4v78l-4 2z" fill="#a6a4c4" />
      <g fill="none" stroke="#1414b8" strokeWidth="1.200">
        <path d="M680 405C700 414 760 419 860 424L1362 449L1900 474" />
        <path d="M1900 583L1362 602C1180 608 980 616 870 623C790 629 690 636 680 644L676 649L680 653C690 660 780 667 870 672C980 678 1180 686 1362 694L1900 716" />
      </g>
      <g fill="none" stroke="#000" strokeWidth="1">
        <path d="M495 321.500H675M495 484.500H675" />
        <path d="M676 321L743 203M816 403L885 285M816 403L860 478M676 485L718 560" />
        <Head x={503.500} y={321} a={-90} />
        <Head x={503.500} y={485} a={90} />
        <Head x={739} y={210} a={-153} />
        <Head x={881} y={292} a={29} />
        <Head x={855} y={471} a={-28} />
        <Head x={714} y={552} a={151} />
      </g>
      <path d="M675.500 321V485" stroke="#000" strokeWidth="2" />
      <path d="M676 403.500H3000" stroke="#000" strokeWidth="1.600" />
      <path d="M676 321L816 403L676 485" fill="none" stroke="#5aa5f5" strokeWidth="3" />
      <text x="434" y="398" fill="#fff" fillOpacity="0.850" fontSize="50" fontWeight="300" fontFamily='"Noto Sans CJK SC", sans-serif'>莫西网</text>
      <text x="585" y="396" fill="#fff" fillOpacity="0.750" fontSize="43" fontFamily='"Liberation Mono", monospace'>www.3dmox.com</text>
      <g stroke="none">
        <rect x="683" y="383" width="12" height="12" fill="#12c84a" />
        <rect x="683" y="398" width="12" height="12" fill="#12c84a" />
        <rect x="655" y="398" width="12" height="11" fill="#5fbf3a" />
        <circle cx="661" cy="403.500" r="4" fill="#f0a83a" />
      </g>
      <g stroke="#0a2a10" strokeWidth="1.200" fill="none">
        <path d="M684 394L695 383M685 386h3M690 391h3M688 388l4 4" />
        <path d="M689 399V409" />
        <circle cx="661" cy="403.500" r="2.500" />
        <path d="M661 403.500l6-6" />
      </g>
      <circle cx="676.500" cy="403.500" r="3" fill="#05051e" />
      <Handle x={675.500} y={321.500} />
      <Handle x={675.500} y={484.500} />
      <Handle x={816.500} y={403.500} />
      <g fontFamily='"Lato", sans-serif' fontSize="16" fontWeight="900" fill="#0a0a0a">
        <text x="488" y="410">2.00</text>
        <text x="817" y="271">2.00</text>
        <text x="762" y="521">2.00</text>
      </g>
      <path d="M270 674V653" stroke="#2c8a30" strokeWidth="3" />
      <path d="M270 643l4.500 10h-9z" fill="#1b5e20" />
      <path d="M270 674H249" stroke="#4a4ae0" strokeWidth="3" />
      <path d="M240 674l10-4.500v9z" fill="#1a1aa8" />
      <circle cx="270" cy="674" r="4.500" fill="#c01818" stroke="#701010" />
      <g fontFamily='"Open Sans", sans-serif' fontSize="11">
        <text x="266" y="641" fill="#2c8a30">Y</text>
        <text x="232" y="678" fill="#2020a0">Z</text>
        <text x="240" y="727" fontSize="13" fontWeight="700">*Right</text>
      </g>
    </g>
  </SceneSvg>
);

/* ---------- application ---------- */

type BigProps = { icon: React.ReactElement; label: string; w: number; low?: boolean; off?: boolean; on?: boolean; menu?: boolean };
const Big = ({ icon, label, w, low, off, on, menu }: BigProps) => (
  <RibbonItem $w={w} $on={on}>
    <RibbonButton $low={low} $off={off} disabled={off}>
      <RibbonGlyph>{icon}</RibbonGlyph>
      <RibbonLabel>{label}</RibbonLabel>
    </RibbonButton>
    {menu && <Arrow w={30} h={16} />}
  </RibbonItem>
);

const navPaths = ["M3 1v6M9 1L5 4l4 3z", "M8 1L4 4l4 3z", "M4 1l4 3-4 3z", "M3 1l4 3-4 3zM9 1v6"];

export default function App() {
  return (
    <Window>
      <GlobalStyle />
      <TitleBar>
        <LogoSlot>
          <svg width="28" height="30" viewBox="0 0 28 30" fill="none" stroke="#bd2d30" strokeWidth="1.900" aria-hidden="true">
            <path d="M10 4c5-2 11-1.500 10 1.500-1 3-6 4-9 6" />
            <path d="M7 13c8-1 10 3 7 8-3 4-8 6-13 6 2-5 6-10 10-14" />
            <path d="M27 12c-4-2-9-1.500-8.500 2 .5 3 6 4 5 8-1 4-6 5-10 4.500" />
          </svg>
          <LogoText><b>SOLID</b>WORKS</LogoText>
        </LogoSlot>
        <Menu aria-label="Main menu">
          {menus.map(([name, w]) => <MenuItem key={name} $w={w}>{name}</MenuItem>)}
        </Menu>
        <PinButton aria-label="Pin menu"><PinIcon /></PinButton>
        <Tools>
          <ToolButton aria-label="Home"><HomeIcon /></ToolButton>
          {fileTools.map(([name, Glyph]) => (
            <React.Fragment key={name}>
              <ToolButton $w={22} aria-label={name}><Glyph /></ToolButton>
              <Arrow label={`${name} options`} />
            </React.Fragment>
          ))}
          <SelectGroup>
            <ToolButton $on aria-label="Select"><CursorIcon /></ToolButton>
            <Arrow w={13} h={24} label="Select options" />
          </SelectGroup>
          <ToolButton aria-label="Rebuild"><TrafficLight h={19} /></ToolButton>
          <ToolButton $w={27} aria-label="File properties"><OptionsIcon /></ToolButton>
          <ToolButton $w={23} aria-label="Options"><GearIcon /></ToolButton>
          <Arrow />
        </Tools>
        <DocTitle>Sket...</DocTitle>
        <SearchBox role="search">
          <Icon w={16} h={16}>
            <rect x="1" y="1" width="14" height="14" fill="#222" stroke="#555" strokeWidth="2" />
            <path d="M5 4l4 4-4 4M9 12h3" stroke="#fff" strokeWidth="1.600" />
          </Icon>
          <SearchInput aria-label="Search Commands" placeholder="Search Commands" />
          <Icon w={18} h={18}>
            <path d="M2 16l5-5" stroke="#5c6f86" strokeWidth="2.500" />
            <circle cx="11" cy="7" r="5.500" fill="#eef4fb" stroke="#7d93ad" />
          </Icon>
          <Arrow w={15} />
        </SearchBox>
        <WindowButtons>
          <ToolButton $w={26} aria-label="Account">
            <Icon w={14} h={20}>
              <circle cx="7" cy="5" r="3.800" fill="#ddd" stroke="#888" />
              <path d="M1.500 18v-4c0-3 2-4 5.500-4s5.500 1 5.500 4v4z" fill="#ccc" stroke="#888" />
            </Icon>
          </ToolButton>
          <ToolButton $w={26} aria-label="Help">
            <Icon w={12} h={16}>
              <path d="M2 5c0-5 8-5 8-.5C10 7.500 6 7.500 6 11" stroke="#333" strokeWidth="2.400" />
              <path d="M4.700 13h2.600v2.500H4.700z" fill="#333" stroke="none" />
            </Icon>
          </ToolButton>
          <Arrow w={12} />
          <ToolButton $w={26} aria-label="Minimize"><Minus /></ToolButton>
          <ToolButton $w={26} aria-label="Restore"><Restore /></ToolButton>
          <ToolButton $w={23} aria-label="Close"><Cross /></ToolButton>
        </WindowButtons>
      </TitleBar>

      <Ribbon>
        <SplitItem $w={44}>
          <RibbonButton $pressed><RibbonGlyph><ExitIcon /></RibbonGlyph><RibbonLabel>{"Exit\nSketch"}</RibbonLabel></RibbonButton>
          <Arrow w={30} h={16} label="Exit Sketch options" />
        </SplitItem>
        <Big icon={<DimensionIcon />} label={"Smart\nDimension"} w={65} menu />
        <Rule />
        <SketchGrid>
          {sketchTools.map(([name, Glyph, more]) => (
            <GridCell key={name}>
              <ToolButton $w={21} aria-label={name}><Glyph /></ToolButton>
              {more && <Arrow label={`${name} options`} />}
            </GridCell>
          ))}
        </SketchGrid>
        <Rule />
        <Big icon={<TrimIcon />} label={"Trim\nEntities"} w={49} menu />
        <Big icon={<ConvertIcon />} label={"Convert\nEntities"} w={50} menu />
        <Big icon={<OffsetIcon />} label={"Offset\nEntities"} w={48} low />
        <Big icon={<SurfaceIcon />} label={"Offset\nOn\nSurface"} w={48} low off />
        <CommandList>
          <CommandRow><Command><MirrorIcon />Mirror Entities</Command></CommandRow>
          <CommandRow><Command><PatternIcon />Linear Sketch Pattern</Command><Arrow label="Pattern options" /></CommandRow>
          <CommandRow><Command><MoveIcon />Move Entities</Command><Arrow label="Move options" /></CommandRow>
        </CommandList>
        <Rule />
        <Big icon={<RelationsIcon />} label={"Display/Delete\nRelations"} w={86} menu />
        <Big icon={<RepairIcon />} label={"Repair\nSketch"} w={44} low />
        <Rule />
        <Big icon={<SnapsIcon />} label={"Quick\nSnaps"} w={43} menu />
        <Rule />
        <Big icon={<RapidIcon />} label={"Rapid\nSketch"} w={45} low />
        <Big icon={<InstantIcon />} label="Instant2D" w={60} low on />
        <Big icon={<ShadedIcon />} label={"Shaded\nSketch\nContours"} w={58} low on />
      </Ribbon>

      <Work>
        <Scene />
        <TabRow>
          {tabs.map(([name, w]) => <Tab key={name} $w={w} $active={name === "Sketch"}>{name}</Tab>)}
          <DocButtons>
            <ToolButton $w={20} aria-label="Tile left">
              <Icon w={14} h={15}><rect x="1" y="1" width="12" height="13" stroke="#4c4e5a" /><path d="M10 1v13M7 5v5L4 7.500z" fill="#4c4e5a" stroke="#4c4e5a" strokeWidth="1" /></Icon>
            </ToolButton>
            <ToolButton $w={20} aria-label="Tile right">
              <Icon w={14} h={15}><rect x="1" y="1" width="12" height="13" stroke="#4c4e5a" /><path d="M4 1v13M7 5v5l3-2.500z" fill="#4c4e5a" stroke="#4c4e5a" strokeWidth="1" /></Icon>
            </ToolButton>
            <ToolButton $w={20} aria-label="Minimize document"><Minus color="#4c4e5a" /></ToolButton>
            <ToolButton $w={20} aria-label="Restore document"><Restore color="#4c4e5a" /></ToolButton>
            <ToolButton $w={20} aria-label="Close document"><Cross color="#4c4e5a" /></ToolButton>
          </DocButtons>
        </TabRow>
        <Body>
          <Sidebar>
            <Splitter>
              <Icon w={7} h={7}><circle cx="3.500" cy="3.500" r="2.500" stroke="#999" strokeWidth="1" /></Icon>
            </Splitter>
            <PanelTabs>
              <PanelTab $active aria-label="Feature tree"><PartIcon /></PanelTab>
              <PanelTab aria-label="Properties"><OptionsIcon head /></PanelTab>
              <PanelTab aria-label="Configurations"><ConfigIcon /></PanelTab>
              <PanelTab aria-label="Dimensions"><TargetIcon /></PanelTab>
              <PanelTab $last aria-label="Display"><BallIcon /></PanelTab>
              <PanelScroll>
                <button aria-label="Scroll tabs left"><Icon w={5} h={7}><path d="M4 0v7L0 3.500z" fill="#000" stroke="none" /></Icon></button>
                <button aria-label="Scroll tabs right"><Icon w={5} h={7}><path d="M1 0v7l4-3.500z" fill="#000" stroke="none" /></Icon></button>
              </PanelScroll>
            </PanelTabs>
            <FilterBox>
              <FilterIcon />
              <input aria-label="Filter tree" />
            </FilterBox>
            <Tree>
              <TreeRow $root><RootPartIcon />{"Part2  (Default<<Default>_Display State 1>)"}</TreeRow>
              {tree.map(([name, Glyph, open]) => (
                <TreeRow key={name}>
                  <Expander aria-label={`Expand ${name}`} disabled={!open}>
                    {open && <Icon w={4} h={8}><path d="M0 0v8l4-4z" fill="#555" stroke="none" /></Icon>}
                  </Expander>
                  <TreeIcon><Glyph /></TreeIcon>
                  {name}
                </TreeRow>
              ))}
            </Tree>
            <ScrollRow>
              <ArrowButton aria-label="Scroll left"><Icon w={6} h={9}><path d="M5 .5l-4 4 4 4" strokeWidth="1.800" /></Icon></ArrowButton>
              <ScrollTrack><ScrollThumb /></ScrollTrack>
              <ArrowButton aria-label="Scroll right"><Icon w={6} h={9}><path d="M1 .5l4 4-4 4" strokeWidth="1.800" /></Icon></ArrowButton>
            </ScrollRow>
            <PanelEdge />
            <CollapseHandle aria-label="Collapse panel">
              <Icon w={6} h={6}><circle cx="3" cy="3" r="2" stroke="#999" strokeWidth="1" /></Icon>
            </CollapseHandle>
          </Sidebar>
          <Viewport>
            <HeadsUp>
              {viewTools.map(([name, Glyph, more]) => (
                <React.Fragment key={name}>
                  <ToolButton $w={26} aria-label={name}><Glyph /></ToolButton>
                  {more && <Arrow w={14} h={24} label={`${name} options`} color="#83858e" />}
                </React.Fragment>
              ))}
            </HeadsUp>
            <ConfirmCorner>
              <Icon w={74} h={60}>
                <path d="M26 5H4v15c0 8 4 10 16 10" stroke="#7e96a6" strokeWidth="6" />
                <path d="M27 5H4v15c0 8 4 10 17 10" stroke="#747689" strokeWidth="4" />
                <path d="M46 18c-1 5-4 6-9 6v-6L24 29l13 10v-6c7 0 10-5 9-15z" fill="#5d8193" stroke="#446a7e" strokeWidth="1.500" />
                <path d="M50 38l6-2 4 5 5-5 6 2-6 9 6 8-6 3-5-5-5 5-5-3 6-8z" fill="#a85560" stroke="none" />
              </Icon>
            </ConfirmCorner>
            <TaskPane>
              {taskTools.map(([name, Glyph]) => (
                <TaskButton key={name} $active={name === "Appearances"} aria-label={name}><Glyph /></TaskButton>
              ))}
            </TaskPane>
          </Viewport>
        </Body>
      </Work>

      <BottomTabs>
        <NavGroup>
          {navPaths.map((d, i) => (
            <button key={d} aria-label={["First tab", "Previous tab", "Next tab", "Last tab"][i]}>
              <Icon w={12} h={8}><path d={d} fill="#7e7e7e" stroke="#7e7e7e" strokeWidth="1" /></Icon>
            </button>
          ))}
        </NavGroup>
        <BottomTab $w={57} $active>Model</BottomTab>
        <BottomTab $w={67}>3D Views</BottomTab>
        <BottomTab $w={108}>Motion Study 1</BottomTab>
      </BottomTabs>

      <StatusBar>
        <StatusName>SOLIDWORKS Premium 2018 x64 Edition</StatusName>
        <StatusCell $w={91}>Angle: 60deg</StatusCell>
        <StatusCell $w={79} $line>Fully Defined</StatusCell>
        <StatusCell $w={8} $line />
        <StatusCell $w={91} $line>Editing Sketch8</StatusCell>
        <StatusCell $w={32} $line>
          <ToolButton $w={28} aria-label="Rebuild status"><TrafficLight h={12} /></ToolButton>
        </StatusCell>
        <StatusCell $w={28} />
        <StatusCell $w={52}>MMGS</StatusCell>
        <StatusCell $w={74}>
          <ArrowButton $w={10} $h={10} aria-label="Unit system options"><Caret up /></ArrowButton>
        </StatusCell>
        <StatusCell $w={20}>
          <Icon w={16} h={12}><path d="M1 5l6-4 9 4-5 6-9-3z" fill="#ddd" stroke="#555" strokeWidth="1.200" /><circle cx="7" cy="5" r="2" strokeWidth="1" /></Icon>
        </StatusCell>
      </StatusBar>
    </Window>
  );
}
